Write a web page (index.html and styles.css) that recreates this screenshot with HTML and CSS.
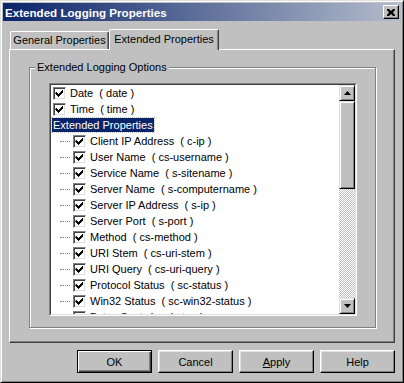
FILE: index.html
```html
<!DOCTYPE html>
<html lang="en">
<head>
    <meta charset="UTF-8">
    <title>Extended Logging Properties</title>
    <link rel="stylesheet" href="styles.css">
</head>
<body>
    <div class="window">
        <div class="titlebar">
            <span class="title">Extended Logging Properties</span>
            <span class="close">
                <svg width="8" height="7" viewBox="0 0 8 7"><path d="M0 0h2l2 2 2-2h2v1l-2 2.5 2 2.5v1h-2l-2-2-2 2h-2v-1l2-2.5-2-2.5z" fill="#000"/></svg>
            </span>
        </div>

        <div class="content">
            <div class="tabs">
                <div class="tab">General Properties</div>
                <div class="tab active">Extended Properties</div>
            </div>

            <div class="panel">
                <div class="groupbox">
                    <span class="legend">Extended Logging Options</span>

                    <div class="tree">
                        <div class="tree-inner">
                            <ul class="nodes">
                                <li class="node"><span class="check on"></span><span>Date&nbsp; ( date )</span></li>
                                <li class="node"><span class="check on"></span><span>Time&nbsp; ( time )</span></li>
                                <li class="node heading"><span class="selected">Extended Properties</span></li>
                                <li class="node child"><span class="dots"></span><span class="check on"></span><span>Client IP Address&nbsp; ( c-ip )</span></li>
                                <li class="node child"><span class="dots"></span><span class="check on"></span><span>User Name&nbsp; ( cs-username )</span></li>
                                <li class="node child"><span class="dots"></span><span class="check on"></span><span>Service Name&nbsp; ( s-sitename )</span></li>
                                <li class="node child"><span class="dots"></span><span class="check on"></span><span>Server Name&nbsp; ( s-computername )</span></li>
                                <li class="node child"><span class="dots"></span><span class="check on"></span><span>Server IP Address&nbsp; ( s-ip )</span></li>
                                <li class="node child"><span class="dots"></span><span class="check on"></span><span>Server Port&nbsp; ( s-port )</span></li>
                                <li class="node child"><span class="dots"></span><span class="check on"></span><span>Method&nbsp; ( cs-method )</span></li>
                                <li class="node child"><span class="dots"></span><span class="check on"></span><span>URI Stem&nbsp; ( cs-uri-stem )</span></li>
                                <li class="node child"><span class="dots"></span><span class="check on"></span><span>URI Query&nbsp; ( cs-uri-query )</span></li>
                                <li class="node child"><span class="dots"></span><span class="check on"></span><span>Protocol Status&nbsp; ( sc-status )</span></li>
                                <li class="node child"><span class="dots"></span><span class="check on"></span><span>Win32 Status&nbsp; ( sc-win32-status )</span></li>
                                <li class="node child"><span class="dots"></span><span class="check"></span><span>Bytes Sent&nbsp; ( sc-bytes )</span></li>
                            </ul>

                            <div class="scrollbar">
                                <div class="sb-btn">
                                    <svg width="7" height="4" viewBox="0 0 7 4"><path d="M3.5 0L7 4H0z" fill="#000"/></svg>
                                </div>
                                <div class="sb-thumb"></div>
                                <div class="sb-track"></div>
                                <div class="sb-btn">
                                    <svg width="7" height="4" viewBox="0 0 7 4"><path d="M0 0h7L3.5 4z" fill="#000"/></svg>
                                </div>
                            </div>
                        </div>
                    </div>
                </div>
            </div>

            <div class="buttons">
                <button class="btn default">OK</button>
                <button class="btn">Cancel</button>
                <button class="btn"><u>A</u>pply</button>
                <button class="btn">Help</button>
            </div>
        </div>
    </div>
</body>
</html>
```

FILE: styles.css
```css
* {
    box-sizing: border-box;
}
body {
    margin: 0;
    background: #c0c0c0;
    font-family: "Liberation Sans", Arial, sans-serif;
    font-size: 11px;
    color: #000;
}
.window {
    width: 404px;
    height: 383px;
    background: #c0c0c0;
    border: 1px solid;
    border-color: #dfdfdf #000 #000 #dfdfdf;
    box-shadow: inset 1px 1px #fff, inset -1px -1px #808080;
    padding: 2px;
}
.titlebar {
    height: 18px;
    background: linear-gradient(to right, #0a246a, #b4bccc);
    color: #fff;
    display: flex;
    align-items: center;
    justify-content: space-between;
    padding: 0 2px;
}
.title {
    font-weight: bold;
    font-size: 11.6px;
}
.close {
    width: 16px;
    height: 14px;
    background: #c0c0c0;
    border: 1px solid;
    border-color: #fff #000 #000 #fff;
    box-shadow: inset -1px -1px #808080;
    display: flex;
    align-items: center;
    justify-content: center;
}
.close svg {
    display: block;
}
.content {
    padding: 8px 6px 0 6px;
}
.tabs {
    display: flex;
    align-items: flex-end;
    height: 20px;
    padding-left: 1px;
}
.tab {
    width: 99px;
    height: 18px;
    border: 1px solid;
    border-color: #fff #404040 transparent #fff;
    border-bottom: none;
    border-radius: 2px 2px 0 0;
    box-shadow: inset -1px 0 #808080;
    text-align: center;
    line-height: 17px;
    white-space: nowrap;
}
.tab.active {
    width: 110px;
    height: 21px;
    margin-bottom: -1px;
    background: #c0c0c0;
    position: relative;
    z-index: 1;
    line-height: 18px;
}
.panel {
    height: 294px;
    border: 1px solid;
    border-color: #fff #404040 #404040 #fff;
    box-shadow: inset -1px -1px #808080;
    padding: 17px 0 0 19px;
}
.groupbox {
    position: relative;
    width: 347px;
    height: 261px;
    border: 1px solid #808080;
    box-shadow: inset 1px 1px #fff, 1px 1px #fff;
    padding: 15px 0 0 19px;
}
.legend {
    position: absolute;
    top: -8px;
    left: 5px;
    padding: 0 2px;
    background: #c0c0c0;
    line-height: 14px;
}
.tree {
    width: 308px;
    height: 233px;
    border: 1px solid;
    border-color: #808080 #fff #fff #808080;
}
.tree-inner {
    height: 100%;
    border: 1px solid;
    border-color: #404040 #dfdfdf #dfdfdf #404040;
    background: #fff;
    display: flex;
}
.nodes {
    flex: 1;
    list-style: none;
    margin: 0;
    padding: 0;
    overflow: hidden;
}
.node {
    height: 16px;
    display: flex;
    align-items: center;
    padding-left: 2px;
    white-space: nowrap;
}
.node.heading {
    padding-left: 1px;
}
.node.child {
    padding-left: 9px;
}
.selected {
    background: #0a246a;
    color: #fff;
    padding: 0 1px;
    line-height: 14px;
    outline: 1px dotted #c0c0c0;
}
.dots {
    width: 10px;
    border-top: 1px dotted #808080;
    margin-right: 3px;
}
.check {
    width: 13px;
    height: 13px;
    margin-right: 4px;
    border: 1px solid;
    border-color: #808080 #fff #fff #808080;
    box-shadow: inset 1px 1px #404040, inset -1px -1px #dfdfdf;
    background: #fff;
    flex: none;
}
.check.on {
    background: #fff url("data:image/svg+xml,%3Csvg xmlns='http://www.w3.org/2000/svg' width='11' height='11'%3E%3Cpath d='M2 4h1v1h1v1h1v-1h1v-1h1v-1h1v-1h1v3h-1v1h-1v1h-1v1h-1v1h-1v-1h-1v-1h-1v-1h-1z' fill='%23000'/%3E%3C/svg%3E") no-repeat 0 0;
}
.scrollbar {
    width: 16px;
    display: flex;
    flex-direction: column;
}
.sb-btn,
.sb-thumb {
    height: 16px;
    background: #c0c0c0;
    border: 1px solid;
    border-color: #dfdfdf #000 #000 #dfdfdf;
    box-shadow: inset 1px 1px #fff, inset -1px -1px #808080;
    display: flex;
    align-items: center;
    justify-content: center;
    flex: none;
}
.sb-thumb {
    height: 88px;
}
.sb-track {
    flex: 1;
    background: repeating-conic-gradient(#c0c0c0 0 25%, #fff 0 50%) 0 0 / 2px 2px;
}
.buttons {
    display: flex;
    justify-content: flex-end;
    gap: 6px;
    margin-top: 7px;
}
.btn {
    width: 75px;
    height: 23px;
    padding: 0;
    font-family: inherit;
    font-size: 11px;
    color: #000;
    background: #c0c0c0;
    border: 1px solid;
    border-color: #fff #000 #000 #fff;
    box-shadow: inset -1px -1px #808080, inset 1px 1px #dfdfdf;
}
.btn.default {
    border-color: #000;
    box-shadow: inset 1px 1px #fff, inset -1px -1px #404040, inset -2px -2px #808080;
}
```
